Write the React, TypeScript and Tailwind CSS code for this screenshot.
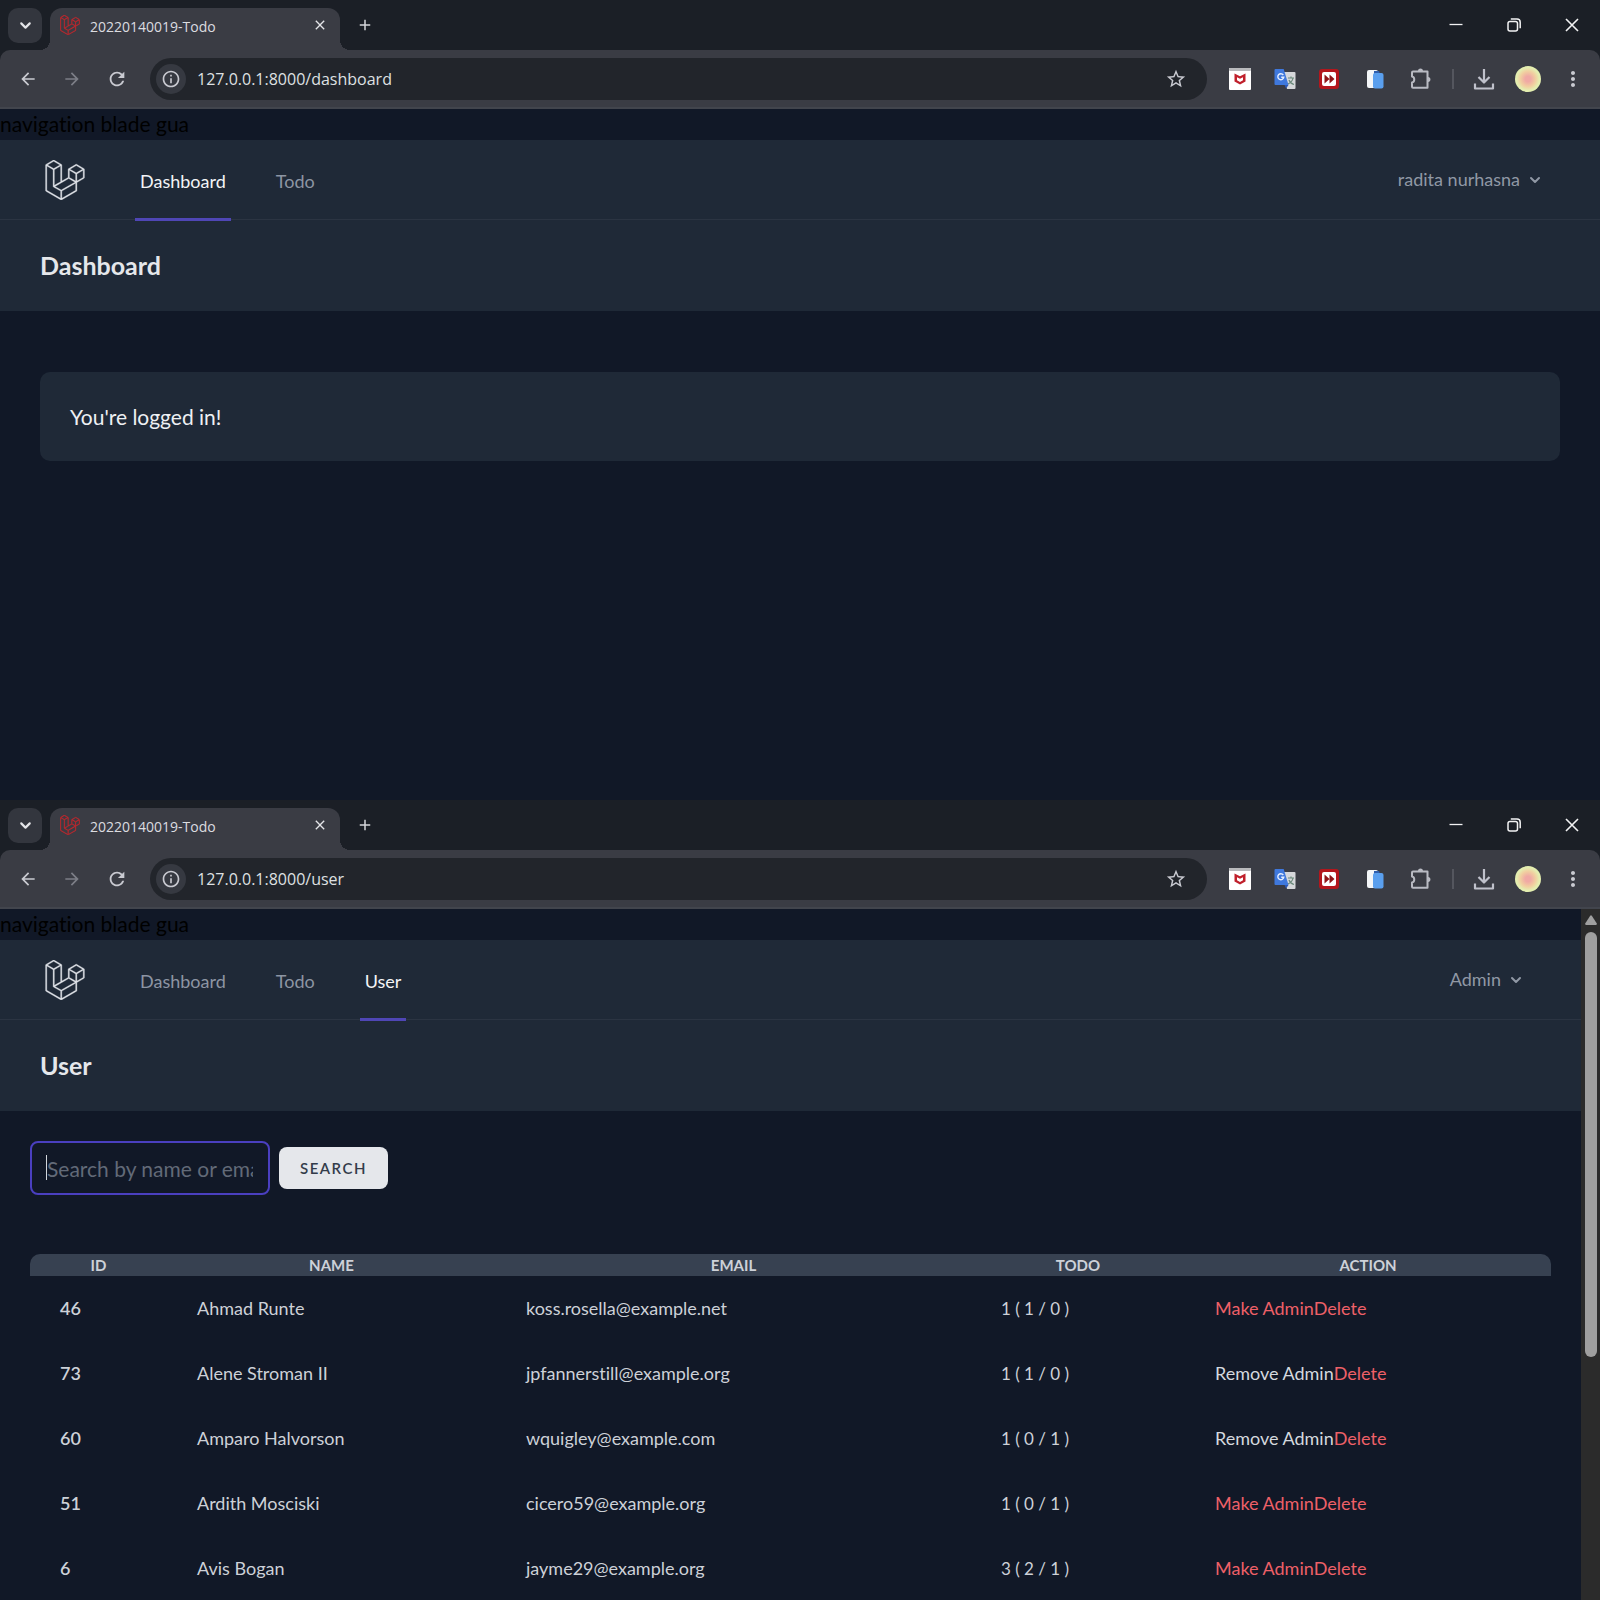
import type { ReactNode } from "react";
import { SiLaravel } from "react-icons/si";
import {
  MdAdd,
  MdArrowBack,
  MdArrowForward,
  MdClose,
  MdInfoOutline,
  MdMoreVert,
  MdRefresh,
  MdStarBorder,
} from "react-icons/md";
import { ChevronDown } from "lucide-react";

function McAfeeIcon() {
  return (
    <svg viewBox="0 0 22 22" className="size-[22px]" aria-hidden="true">
      <rect width="22" height="22" rx="1" fill="#fff" />
      <rect width="22" height="3" rx="1" fill="#b9babd" />
      <path d="M5.500 5.500 11 8.300l5.500-2.800v8L11 16.600l-5.500-3.100Z" fill="#c0202c" />
      <path d="m8 9.300 3 1.500 3-1.500v3L11 14l-3-1.700Z" fill="#fff" />
    </svg>
  );
}

function TranslateIcon() {
  return (
    <svg viewBox="0 0 22 22" className="size-[22px]" aria-hidden="true">
      <path d="M9 4h11.500a1 1 0 0 1 1 1v15a1 1 0 0 1-1 1H13Z" fill="#d5d7da" />
      <path d="M14 10h6M17 8.500V10M19 10c-.5 3-3 5-5 6M15 12c.8 2 3 4 5 4.500" stroke="#6b8a7c" strokeWidth="1.200" fill="none" />
      <path d="M1.500 1h8.200l4.800 16H1.500a1 1 0 0 1-1-1V2a1 1 0 0 1 1-1Z" fill="#3f78dc" />
      <path d="m10.500 17 4-.1L12 20.500Z" fill="#2b57b5" />
      <path d="M9.300 7A3 3 0 1 0 9.800 9.200H7.200" stroke="#e4edff" strokeWidth="1.400" fill="none" />
    </svg>
  );
}

function FastForwardIcon() {
  return (
    <svg viewBox="0 0 20 20" className="size-[20px]" aria-hidden="true">
      <rect width="20" height="20" rx="3" fill="#b3161c" />
      <rect x="3" y="3" width="14" height="14" rx="2" fill="#fff" />
      <path d="m5.500 5.500 5 4.500-5 4.500Zm5 0 5 4.500-5 4.500Z" fill="#8f1518" />
    </svg>
  );
}

function PagesIcon() {
  return (
    <svg viewBox="0 0 18 20" className="h-[20px] w-[18px]" aria-hidden="true">
      <rect x="1" y="1" width="11" height="18" rx="2" fill="#f4f6f8" />
      <path d="M8 2h4.500a1 1 0 0 1 1 1v2H8Z" fill="#2f5fae" />
      <rect x="7" y="4" width="10.500" height="15.500" rx="2" fill="#5a9fee" />
    </svg>
  );
}

function PuzzleIcon() {
  return (
    <svg viewBox="0 0 24 24" className="size-[24px]" fill="none" stroke="#b9bbc3" strokeWidth="2" strokeLinejoin="round" aria-hidden="true">
      <path d="M4 4.500h14.500v16.200H4c-.6 0-1-.4-1-1v-4.200c3-.4 3-5.600 0-6V5.500c0-.6.4-1 1-1Z" />
      <path d="M9 4c0-3.300 5-3.300 5 0Z M19 10c3.300 0 3.300 5 0 5Z" fill="#b9bbc3" stroke="none" />
    </svg>
  );
}

function DownloadIcon() {
  return (
    <svg viewBox="0 0 22 24" className="h-[24px] w-[22px]" fill="none" stroke="#bfc1cb" strokeWidth="2.200" strokeLinejoin="round" aria-hidden="true">
      <path d="M11 2v13M5.500 10l5.500 5.500 5.500-5.500M2 16.500V21.500h18v-5" />
    </svg>
  );
}

function TabStrip() {
  return (
    <div className="flex h-[50px] items-end bg-[#1b1f26] pl-2">
      <button
        aria-label="Search tabs"
        className="mb-[7px] flex h-[35px] w-[34px] items-center justify-center rounded-[10px] bg-[#33363e] text-[#e4e5e8]"
      >
        <ChevronDown size={17} strokeWidth={3} />
      </button>
      <div className="relative ml-2 flex h-[42px] w-[290px] items-center rounded-t-[12px] bg-[#3a3c44] pr-3 pb-2 pl-[10px]">
        <span className="absolute bottom-0 -left-[10px] size-[10px] bg-[radial-gradient(circle_at_0_0,transparent_10px,#3a3c44_10px)]" />
        <span className="absolute -right-[10px] bottom-0 size-[10px] bg-[radial-gradient(circle_at_100%_0,transparent_10px,#3a3c44_10px)]" />
        <SiLaravel size={20} className="stroke-[#c6282d] text-[#c6282d] [stroke-width:0.4px]" />
        <span className="ml-[10px] flex-1 pt-[2px] font-['Open_Sans',sans-serif] text-[14px] text-[#dcdde0]">20220140019-Todo</span>
        <button aria-label="Close tab" className="text-[#e4e5e8]">
          <MdClose size={16} />
        </button>
      </div>
      <button aria-label="New tab" className="mb-4 ml-4 text-[#d5d6da]">
        <MdAdd size={18} />
      </button>
      <div className="mb-[15px] ml-auto flex gap-[38px] pr-[18px] text-[#f2f2f3]">
        <button aria-label="Minimize">
          <svg viewBox="0 0 20 20" className="size-[20px]" stroke="currentColor" strokeWidth="1.300">
            <path d="M3.500 9.500h13" />
          </svg>
        </button>
        <button aria-label="Restore">
          <svg viewBox="0 0 20 20" className="size-[20px]" fill="none" stroke="currentColor" strokeWidth="1.500">
            <rect x="4" y="6.500" width="9.500" height="9.500" rx="2" />
            <path d="M6.800 4h6.200c2 0 3.200 1.200 3.200 3.200v6" />
          </svg>
        </button>
        <button aria-label="Close window">
          <svg viewBox="0 0 20 20" className="size-[20px]" stroke="currentColor" strokeWidth="1.600">
            <path d="m4 4 12 12M16 4 4 16" />
          </svg>
        </button>
      </div>
    </div>
  );
}

function Toolbar({ path }: { path: string }) {
  return (
    <div className="bg-[#1b1f26]">
      <div className="flex h-[59px] items-center rounded-t-[10px] border-b-2 border-[#42454d] bg-[#3a3c44] pr-[15px] pl-[18px] text-[#c9cad1]">
        <div className="flex items-center gap-6">
          <button aria-label="Back">
            <MdArrowBack size={20} />
          </button>
          <button aria-label="Forward" className="text-[#7c7e87]">
            <MdArrowForward size={20} />
          </button>
          <button aria-label="Reload">
            <MdRefresh size={22} />
          </button>
        </div>
        <div className="ml-[22px] flex h-[42px] flex-1 items-center rounded-full bg-[#22252b] pr-5 pl-[6px]">
          <button aria-label="Site information" className="flex size-[30px] items-center justify-center rounded-full bg-[#363941]">
            <MdInfoOutline size={20} />
          </button>
          <input
            aria-label="Address"
            readOnly
            value={`127.0.0.1:8000/${path}`}
            className="ml-[11px] flex-1 bg-transparent font-['Open_Sans',sans-serif] text-[16px] text-[#dfe0e2] outline-none"
          />
          <button aria-label="Bookmark this page">
            <MdStarBorder size={22} />
          </button>
        </div>
        <div className="ml-[22px] flex items-center gap-[23px]">
          <button aria-label="McAfee"><McAfeeIcon /></button>
          <button aria-label="Translate"><TranslateIcon /></button>
          <button aria-label="Fast forward"><FastForwardIcon /></button>
          <button aria-label="Pages" className="ml-1"><PagesIcon /></button>
          <button aria-label="Extensions" className="ml-[2px]"><PuzzleIcon /></button>
          <span className="-ml-1 h-5 w-[2px] bg-[#54565e]" />
          <button aria-label="Downloads" className="-ml-1"><DownloadIcon /></button>
          <button
            aria-label="Profile"
            className="-ml-[3px] size-[26px] rounded-full bg-[radial-gradient(circle,#f0a9a4_15%,#f1cfa0_42%,#e4eeb0_62%)]"
          />
        </div>
        <button aria-label="Menu" className="ml-5">
          <MdMoreVert size={24} />
        </button>
      </div>
    </div>
  );
}

function PageHeader({ links, active, user, title }: { links: string[]; active: string; user: string; title: string }) {
  return (
    <>
      <div className="h-[31px] text-[21px] leading-[29px] text-black">navigation blade gua</div>
      <nav className="flex h-[80px] border-b border-[#2b3442] bg-[#1f2937] px-10">
        <a href="#" aria-label="Home" className="flex w-[45px] items-center justify-end">
          <SiLaravel size={40} className="stroke-[#d5d9df] text-[#e0e3e8] [stroke-width:0.2px]" />
        </a>
        <div className="ml-[50px] flex gap-10">
          {links.map((link) => (
            <a
              key={link}
              href="#"
              className={
                link === active
                  ? "-mb-[2px] flex items-center border-b-3 border-[#4f46b5] px-[5px] pt-1 text-[18px] text-[#f3f4f6]"
                  : "-mb-[2px] flex items-center border-b-3 border-transparent px-[5px] pt-1 text-[18px] text-[#8d95a3]"
              }
            >
              {link}
            </a>
          ))}
        </div>
        <button className="ml-auto flex items-center gap-[5px] pr-[15px] text-[18px] text-[#9098a5]">
          {user}
          <span className="flex w-5 justify-center">
            <ChevronDown size={16} strokeWidth={3} />
          </span>
        </button>
      </nav>
      <header className="bg-[#1f2937] px-10 py-[30px]">
        <h1 className="text-[25px] leading-[31px] font-bold text-[#e5e7eb]">{title}</h1>
      </header>
    </>
  );
}

function Browser({ path, children }: { path: string; children: ReactNode }) {
  return (
    <section className="flex min-h-0 flex-col overflow-hidden bg-[#111827]">
      <TabStrip />
      <Toolbar path={path} />
      <div className="flex min-h-0 flex-1">{children}</div>
    </section>
  );
}

const users = [
  { id: 46, name: "Ahmad Runte", email: "koss.rosella@example.net", todo: "1 ( 1 / 0 )", admin: false },
  { id: 73, name: "Alene Stroman II", email: "jpfannerstill@example.org", todo: "1 ( 1 / 0 )", admin: true },
  { id: 60, name: "Amparo Halvorson", email: "wquigley@example.com", todo: "1 ( 0 / 1 )", admin: true },
  { id: 51, name: "Ardith Mosciski", email: "cicero59@example.org", todo: "1 ( 0 / 1 )", admin: false },
  { id: 6, name: "Avis Bogan", email: "jayme29@example.org", todo: "3 ( 2 / 1 )", admin: false },
];

function UserTable() {
  return (
    <table className="w-full table-fixed border-collapse text-left text-[18px] text-[#cdd1d8]">
      <colgroup>
        <col className="w-[137px]" />
        <col className="w-[329px]" />
        <col className="w-[475px]" />
        <col className="w-[214px]" />
        <col className="w-[366px]" />
      </colgroup>
      <thead>
        <tr className="text-center text-[15px] leading-[22px]">
          <th className="rounded-tl-[10px] bg-[#374151] font-bold">ID</th>
          <th className="bg-[#374151] font-bold">NAME</th>
          <th className="bg-[#374151] font-bold">EMAIL</th>
          <th className="bg-[#374151] font-bold">TODO</th>
          <th className="rounded-tr-[10px] bg-[#374151] font-bold">ACTION</th>
        </tr>
      </thead>
      <tbody>
        {users.map((user) => (
          <tr key={user.id} className="h-[65px]">
            <td className="px-[30px] font-semibold">{user.id}</td>
            <td className="px-[30px]">{user.name}</td>
            <td className="px-[30px]">{user.email}</td>
            <td className="px-[30px] text-[17px]">{user.todo}</td>
            <td className="px-[30px]">
              <div className="flex">
                <button className={user.admin ? "text-[#d5d9df]" : "text-[#ee6068]"}>
                  {user.admin ? "Remove Admin" : "Make Admin"}
                </button>
                <button className="text-[#ee6068]">Delete</button>
              </div>
            </td>
          </tr>
        ))}
      </tbody>
    </table>
  );
}

function Scrollbar() {
  return (
    <div className="flex w-[19px] flex-col items-center bg-[#2b2b2b] pt-[6px]" aria-hidden="true">
      <svg viewBox="0 0 12 10" className="h-[10px] w-[12px]" fill="#9f9f9f">
        <path d="M5.200.8q.8-1 1.600 0L11.800 8.500q.4 1.300-.8 1.500H1q-1.200-.2-.8-1.500Z" />
      </svg>
      <div className="mt-[7px] h-[62%] w-3 rounded-full bg-[#9f9f9f]" />
    </div>
  );
}

export default function App() {
  return (
    <div className="grid h-screen grid-rows-2 overflow-hidden font-['Lato',sans-serif] [font-variant-ligatures:none]">
      <Browser path="dashboard">
        <div className="flex-1">
          <PageHeader links={["Dashboard", "Todo"]} active="Dashboard" user="radita nurhasna" title="Dashboard" />
          <main className="px-10 py-[61px]">
            <div className="rounded-[10px] bg-[#1f2937] p-[30px] text-[21px] leading-[29px] text-[#eef0f3]">You're logged in!</div>
          </main>
        </div>
      </Browser>
      <Browser path="user">
        <div className="flex-1">
          <PageHeader links={["Dashboard", "Todo", "User"]} active="User" user="Admin" title="User" />
          <main className="p-[30px]">
            <form className="mb-[59px] flex items-center gap-[9px]" onSubmit={(event) => event.preventDefault()}>
              <div className="relative">
                <input
                  type="text"
                  aria-label="Search by name or email"
                  placeholder="Search by name or email ..."
                  className="h-[54px] w-[240px] rounded-[8px] border-2 border-[#4a3fc0] bg-[#111827] px-[15px] text-[21px] text-[#cdd1d8] outline-none placeholder:text-[#626a78]"
                />
                <span className="absolute top-[14px] left-4 h-[25px] w-px bg-[#d1d5db]" />
              </div>
              <button className="h-[42px] rounded-[8px] bg-[#e5e7eb] px-[21px] text-[15px] font-semibold tracking-widest text-[#333c4a]">
                SEARCH
              </button>
            </form>
            <UserTable />
          </main>
        </div>
        <Scrollbar />
      </Browser>
    </div>
  );
}
